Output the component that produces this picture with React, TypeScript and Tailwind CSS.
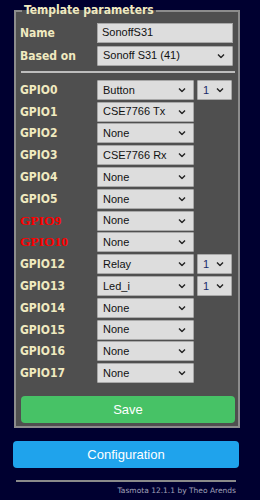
import React from "react";

const Chevron = () => (
  <svg width="8" height="5" viewBox="0 0 8 5" className="absolute right-[7px] top-1/2 -translate-y-1/2">
    <path d="M1 1 L4 4 L7 1" fill="none" stroke="#222" strokeWidth="1.4" />
  </svg>
);

const Sel = ({ text, w, blue }: { text: string; w: string; blue?: boolean }) => (
  <div
    className={`relative h-[20px] ${w} bg-[#dddddd] border border-[#a8a8a8] rounded-[1px] flex items-center pl-[5px] text-[11px] ${blue ? "text-[#1a2a6a]" : "text-[#111]"}`}
    style={{ fontFamily: '"Liberation Sans", Arial, sans-serif' }}
  >
    {text}
    <Chevron />
  </div>
);

const rows: { l: string; v: string; n?: boolean; red?: boolean }[] = [
  { l: "GPIO0", v: "Button", n: true },
  { l: "GPIO1", v: "CSE7766 Tx" },
  { l: "GPIO2", v: "None" },
  { l: "GPIO3", v: "CSE7766 Rx" },
  { l: "GPIO4", v: "None" },
  { l: "GPIO5", v: "None" },
  { l: "GPIO9", v: "None", red: true },
  { l: "GPIO10", v: "None", red: true },
  { l: "GPIO12", v: "Relay", n: true },
  { l: "GPIO13", v: "Led_i", n: true },
  { l: "GPIO14", v: "None" },
  { l: "GPIO15", v: "None" },
  { l: "GPIO16", v: "None" },
  { l: "GPIO17", v: "None" },
];

const labelFont = { fontFamily: '"DejaVu Sans Condensed", "DejaVu Sans", Verdana, sans-serif' };
const footFont = { fontFamily: '"DejaVu Sans", Verdana, sans-serif' };

export default function App() {
  return (
    <div className="w-[260px] h-[500px] bg-[#000030] overflow-hidden">
      <div className="ml-[13px] w-[226px] pt-[3px]">
        <fieldset className="ml-[1px] w-[224px] border-2 border-[#8c8c8c] bg-[#4f4f4f] pl-[4px] pr-[3px] pb-[3px]">
          <legend
            className="ml-[2px] px-[2px] text-[12px] font-bold text-[#f0eac0] leading-[15px]"
            style={labelFont}
          >
            Template parameters
          </legend>
          <div className="flex items-center h-[23px] mt-[3px]">
            <div className="w-[77px] text-[12px] font-bold text-[#f0eac0]" style={labelFont}>Name</div>
            <div
              className="h-[20px] w-[136px] bg-[#dddddd] border border-[#a8a8a8] flex items-center pl-[4px] text-[11px] text-[#111]"
              style={{ fontFamily: '"Liberation Sans", Arial, sans-serif' }}
            >
              SonoffS31
            </div>
          </div>
          <div className="flex items-center h-[23px]">
            <div className="w-[77px] text-[12px] font-bold text-[#f0eac0]" style={labelFont}>Based on</div>
            <Sel text="Sonoff S31 (41)" w="w-[136px]" />
          </div>
          <div className="h-[2px] bg-[#bdbdbd] mt-[4px] mb-[6px] ml-[1px]" />
          {rows.map((r) => (
            <div key={r.l} className="flex items-center h-[21.8px]">
              <div
                className={`w-[77px] font-bold ${r.red ? "text-[#ff0000] text-[13.5px]" : "text-[#f0eac0] text-[12px]"}`}
                style={r.red ? { fontFamily: '"Liberation Serif", "Times New Roman", serif' } : labelFont}
              >
                {r.l}
              </div>
              <Sel text={r.v} w="w-[97px]" />
              {r.n && (
                <div className="ml-[3px]">
                  <Sel text="1" w="w-[35px]" blue />
                </div>
              )}
            </div>
          ))}
          <button
            className="mt-[12px] w-[214px] ml-[1px] h-[27px] rounded-[4px] bg-[#47c266] text-white text-[13px]"
            style={{ fontFamily: '"Liberation Sans", Arial, sans-serif' }}
          >
            Save
          </button>
        </fieldset>
        <button
          className="mt-[13px] w-[226px] h-[27px] rounded-[4px] bg-[#1fa3ec] text-white text-[13px]"
          style={{ fontFamily: '"Liberation Sans", Arial, sans-serif' }}
        >
          Configuration
        </button>
        <div className="mt-[12px] ml-[3px] w-[220px] h-[2px] bg-[#8a8a8a]" />
        <div
          className="mt-[3px] w-[223px] text-right text-[7.5px] text-[#a0a0b8]"
          style={footFont}
        >
          Tasmota 12.1.1 by Theo Arends
        </div>
      </div>
    </div>
  );
}
